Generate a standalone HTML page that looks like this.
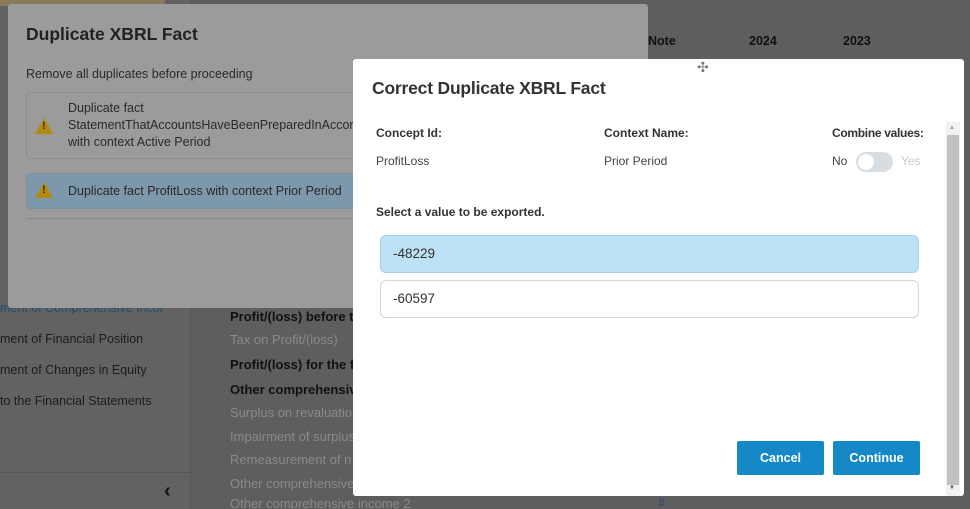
<!DOCTYPE html>
<html style="background:#5e5e5e;width:970px;height:509px;overflow:hidden"><head><style>
*{margin:0;padding:0;box-sizing:border-box}
body{width:970px;height:509px;overflow:hidden;background:#5e5e5e;font-family:"Liberation Sans",sans-serif;position:relative}
.a{position:absolute;white-space:nowrap}
.side{left:0;top:0;width:191px;height:509px;background:#626262;border-right:1px solid #555}
.sb{font-size:12.5px;color:#1c1c1c}
.ct{font-size:13px;color:#8a8a8a}
.cb{font-size:13px;color:#111;font-weight:bold}
.m1{left:8px;top:4px;width:640px;height:304px;background:#9b9b9b;border-radius:3px;overflow:hidden}
.box{position:absolute;border:1px solid #8c8c8c;border-radius:5px}
.warn{position:absolute;width:0;height:0;border-left:9px solid transparent;border-right:9px solid transparent;border-bottom:16px solid #b48a0f}
.warn:after{content:"!";position:absolute;left:-2px;top:2px;font-size:11px;font-weight:bold;color:#333}
.m2{left:353px;top:59px;width:611px;height:437px;background:#fff;border-radius:3px;overflow:hidden}
.lab{font-size:12px;color:#333;font-weight:bold}
.val{font-size:12px;color:#444}
.opt{position:absolute;left:27px;width:539px;height:38px;border:1px solid #d6d6d6;border-radius:6px;font-size:13.5px;color:#333;padding:10px 12px}
.btn{position:absolute;top:382px;width:87px;height:34px;background:#1589c8;color:#fff;font-weight:bold;font-size:12.5px;text-align:center;line-height:34px;border-radius:2px}
</style></head><body>
<div class="a side"></div>
<div class="a" style="left:0;top:0;width:165px;height:6px;background:#8a7a5a"></div>
<div class="a" style="left:0;top:472px;width:191px;height:1px;background:#555"></div>
<div class="a sb" style="left:0;top:301px;color:#1f4d6d">ment of Comprehensive Incor</div>
<div class="a sb" style="left:0;top:332px">ment of Financial Position</div>
<div class="a sb" style="left:0;top:363px">ment of Changes in Equity</div>
<div class="a sb" style="left:0;top:394px">to the Financial Statements</div>
<div class="a" style="left:164px;top:480px;font-size:20px;font-weight:bold;color:#111">&#8249;</div>
<div class="a cb" style="left:648px;top:34px;font-size:12.5px">Note</div>
<div class="a cb" style="left:749px;top:34px;font-size:12.5px">2024</div>
<div class="a cb" style="left:843px;top:34px;font-size:12.5px">2023</div>
<div class="a cb" style="left:230px;top:309px">Profit/(loss) before t</div>
<div class="a ct" style="left:230px;top:332px">Tax on Profit/(loss)</div>
<div class="a cb" style="left:230px;top:357px">Profit/(loss) for the f</div>
<div class="a cb" style="left:230px;top:382px">Other comprehensiv</div>
<div class="a ct" style="left:230px;top:405px">Surplus on revaluatio</div>
<div class="a ct" style="left:230px;top:429px">Impairment of surplus</div>
<div class="a ct" style="left:230px;top:452px">Remeasurement of n</div>
<div class="a ct" style="left:230px;top:476px">Other comprehensive</div>
<div class="a ct" style="left:230px;top:496px">Other comprehensive income 2</div>
<div class="a" style="left:658px;top:495px;color:#2a4a6a;font-size:13px">#</div>

<div class="a m1">
 <div class="a" style="left:18px;top:20px;font-size:17.5px;font-weight:bold;color:#222">Duplicate XBRL Fact</div>
 <div class="a" style="left:18px;top:63px;font-size:12.5px;color:#2a2a2a">Remove all duplicates before proceeding</div>
 <div class="box" style="left:18px;top:88px;width:640px;height:67px"></div>
 <div class="warn" style="left:27px;top:114px"></div>
 <div class="a" style="left:60px;top:96px;font-size:12.5px;color:#2a2a2a;line-height:17px">Duplicate fact<br>StatementThatAccountsHaveBeenPreparedInAccordance<br>with context Active Period</div>
 <div class="box" style="left:18px;top:169px;width:640px;height:36px;background:#7d98aa;border-color:#7a8e9c"></div>
 <div class="warn" style="left:27px;top:178px"></div>
 <div class="a" style="left:60px;top:180px;font-size:12.5px;color:#2a2a2a">Duplicate fact ProfitLoss with context Prior Period</div>
 <div class="a" style="left:18px;top:214px;width:640px;height:1px;background:#888"></div>
</div>

<div class="a m2">
 <div class="a" style="left:19px;top:19px;font-size:17.5px;font-weight:bold;color:#333;letter-spacing:-0.2px">Correct Duplicate XBRL Fact</div>
 <div class="a" style="left:344px;top:0px;font-size:14px;color:#777">&#10019;</div>
 <div class="a lab" style="left:23px;top:67px">Concept Id:</div>
 <div class="a lab" style="left:251px;top:67px">Context Name:</div>
 <div class="a lab" style="left:479px;top:67px;letter-spacing:-0.3px">Combine values:</div>
 <div class="a val" style="left:23px;top:95px">ProfitLoss</div>
 <div class="a val" style="left:251px;top:95px">Prior Period</div>
 <div class="a val" style="left:479px;top:95px">No</div>
 <div class="a" style="left:503px;top:93px;width:37px;height:20px;border-radius:10px;background:#d8dde2"><div style="position:absolute;left:2px;top:2px;width:16px;height:16px;border-radius:50%;background:#fff"></div></div>
 <div class="a val" style="left:548px;top:95px;color:#c8c8c8">Yes</div>
 <div class="a lab" style="left:23px;top:146px">Select a value to be exported.</div>
 <div class="opt" style="top:176px;background:#bde1f5;border-color:#aad0e8">-48229</div>
 <div class="opt" style="top:221px">-60597</div>
 <div class="btn" style="left:384px">Cancel</div>
 <div class="btn" style="left:480px">Continue</div>
 <div class="a" style="left:593px;top:63px;width:14px;height:374px;background:#f1f1f1"></div>
 <div class="a" style="left:594px;top:76px;width:12px;height:350px;background:#c1c1c1"></div>
 <div class="a" style="left:596px;top:66px;font-size:6px;color:#999">&#9650;</div>
 <div class="a" style="left:596px;top:426px;font-size:6px;color:#555">&#9660;</div>
</div>
</body></html>
